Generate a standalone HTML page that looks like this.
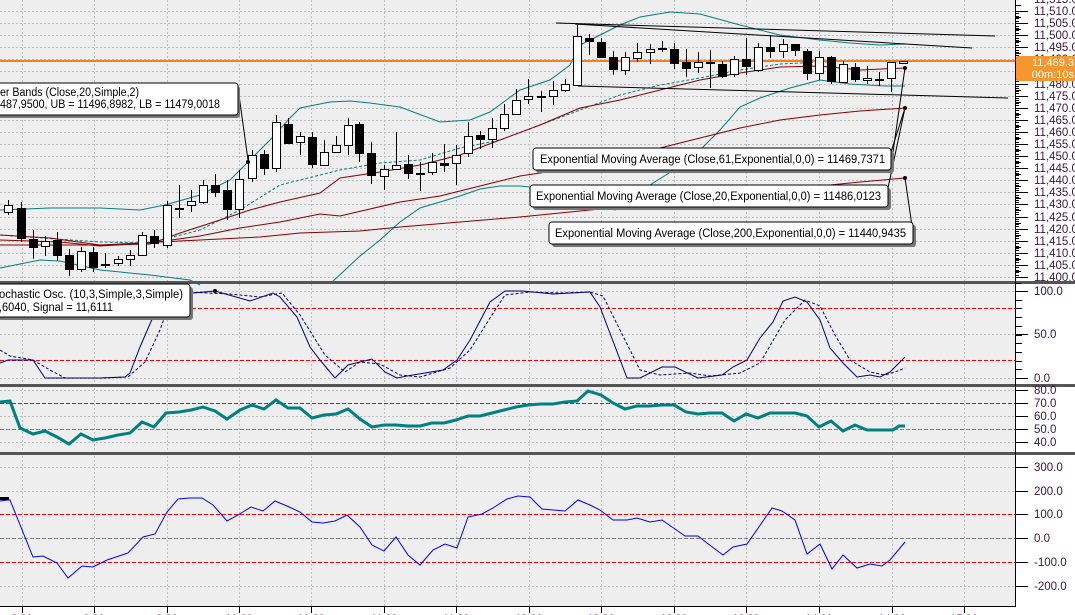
<!DOCTYPE html>
<html><head><meta charset="utf-8"><style>
html,body{margin:0;padding:0;background:#fff;width:1075px;height:615px;overflow:hidden}
svg{display:block}
text{font-family:"Liberation Sans",sans-serif}
</style></head><body>
<svg id="s" width="1075" height="615" xmlns="http://www.w3.org/2000/svg">
<rect x="0" y="0" width="1015" height="606" fill="#eeeeee"/>
<rect x="1015" y="0" width="60" height="615" fill="#fff"/>
<g id="grid"></g>
<g fill="none" stroke-width="1">
<polyline stroke="#008080" points="0,210 50,208 100,208 140,210 165,205 200,195 230,180 250,160 270,140 290,118 300,108 330,102 350,101 370,103 400,107 440,122 470,120 490,112 520,90 550,80 570,65 580,45 600,35 620,25 640,17 670,12 700,14 740,25 780,35 820,40 850,43 880,45 905,44"/>
<polyline stroke="#008080" points="0,268 40,260 60,261 100,270 150,275 190,280 200,285"/>
<polyline stroke="#008080" points="330,284 345,270 360,256 380,240 400,222 420,208 440,202 460,196 480,189 500,186 520,186 540,188 560,192 580,200 600,206 615,210 630,200 653,183 690,160 720,130 740,107 760,98 790,88 820,80 850,84 885,86 905,86"/>
<polyline stroke="#008080" stroke-dasharray="3,2" points="0,235 100,242 150,243 200,230 240,210 280,185 300,180 340,170 380,163 420,160 460,148 500,140 540,125 580,110 620,95 660,85 700,78 740,70 780,64 820,62 860,61 905,62"/>
<polyline stroke="#8b0000" points="0,235 50,238 100,245 150,244 180,233 220,220 250,210 280,202 320,193 340,178 380,172 420,165 460,155 500,140 540,125 580,108 620,100 660,90 700,80 740,73 780,67 820,66 860,70 905,68"/>
<polyline stroke="#8b0000" points="0,240 60,242 100,246 150,243 200,236 240,228 280,222 320,214 340,216 400,202 440,196 480,186 520,176 560,170 600,162 620,160 660,148 700,138 740,128 780,120 820,115 860,111 905,108"/>
<polyline stroke="#8b0000" points="0,245 100,245 200,240 260,237 300,233 360,231 400,227 460,222 520,217 580,211 620,207 700,198 780,190 860,182 905,178"/>
<line x1="556" y1="23" x2="995" y2="36" stroke="#000"/>
<line x1="575" y1="24" x2="972" y2="48" stroke="#000"/>
<line x1="578" y1="86" x2="1008" y2="98" stroke="#000"/>
</g>
<line x1="0" y1="61" x2="1015" y2="61" stroke="#f08020" stroke-width="2"/>
<g id="candles"></g>
<g fill="none" stroke="#000080" stroke-width="1">
<polyline points="0,363 8,360 33,360 45,378 100,378 125,377 130,373 140,347 153,317 163,295 193,293 215,291 250,301 273,293 280,297 297,317 310,347 320,360 335,378 348,365 360,362 372,359 385,372 397,378 407,376 443,370 457,360 470,340 490,302 505,291 523,291 553,294 590,292 600,307 627,378 640,378 662,367 675,367 698,378 722,375 733,367 747,360 760,338 773,322 783,301 795,297 807,302 820,320 830,348 843,363 857,377 870,375 880,377 890,372 905,357"/>
<polyline stroke-dasharray="3,2" points="0,350 10,356 33,360 50,370 65,378 100,378 128,377 145,362 160,330 170,302 185,292 230,294 260,297 282,293 300,315 325,355 345,372 360,362 380,364 400,375 420,377 450,368 470,350 490,318 505,295 530,292 560,293 590,292 603,296 625,340 640,370 660,375 690,373 710,376 740,373 760,363 785,320 805,300 820,306 835,335 850,360 870,372 885,375 895,372 905,368"/>
</g>
<polyline fill="none" stroke="#008080" stroke-width="3" points="0,402 10,401 20,428 33,434 45,431 57,437 69,444 81,434 93,440 105,438 118,435 130,433 142,422 154,427 166,413 179,412 191,410 203,407 215,411 227,419 240,410 252,405 264,409 276,400 288,408 300,408 312,418 324,415 336,414 348,409 360,419 372,427 384,425 396,425 408,426 420,426 432,423 444,423 456,420 468,416 480,416 492,413 504,410 516,407 528,405 541,404 553,404 565,402 577,401 588,391 601,395 613,403 625,409 637,406 650,406 662,405 674,405 686,412 698,414 710,413 722,413 734,421 746,414 758,418 770,413 783,413 795,413 807,416 819,427 831,421 843,431 855,425 867,430 879,430 893,430 899,426 905,426"/>
<polyline fill="none" stroke="#0000ff" stroke-width="1" points="0,501 8,500 10,500 33,557 43,556 57,563 68,578 82,566 93,567 107,560 128,553 143,537 155,534 167,512 178,499 190,498 202,498 213,505 227,521 238,515 251,507 263,511 275,501 287,506 300,512 312,522 323,523 335,521 347,515 360,527 372,545 384,551 396,537 408,555 420,565 433,550 445,544 457,548 468,517 482,514 493,508 507,499 518,496 530,497 542,509 565,511 578,500 590,505 600,510 613,520 627,520 637,518 650,522 662,520 675,529 685,536 698,536 707,543 723,555 733,547 747,544 772,508 782,511 795,520 807,554 820,544 832,569 843,555 857,568 870,564 882,566 890,560 905,542"/>
<rect x="0" y="497" width="9" height="3" fill="#000"/>
<g stroke="#000" stroke-width="1" fill="none">
<polyline points="238,88 248,160"/>
<polyline points="893,152 905,68"/>
<polyline points="891,152 905,108"/>
<polyline points="888,188 905,108"/>
<polyline points="912,226 905,178"/>
</g>
<g fill="#000">
<circle cx="248" cy="162" r="2"/><circle cx="905" cy="68" r="2"/><circle cx="905" cy="108" r="2"/><circle cx="905" cy="178" r="2"/><circle cx="215" cy="291" r="2"/>
</g>
<rect x="0" y="281" width="1075" height="3" fill="#555"/>
<rect x="0" y="384" width="1075" height="3" fill="#555"/>
<rect x="0" y="452" width="1075" height="3" fill="#555"/>
<line x1="1015.5" y1="0" x2="1015.5" y2="606" stroke="#000"/>
<line x1="0" y1="606.5" x2="1016" y2="606.5" stroke="#000"/>
<g id="axis"></g>
<rect x="1016" y="56" width="59" height="25" rx="2" fill="#f7962e"/>
<text x="1074" y="66" font-size="11" fill="#fff" text-anchor="end">11,489.3</text>
<text x="1074" y="78" font-size="11" fill="#fff" text-anchor="end">00m:10s</text>
<g font-size="11.5" fill="#000" lengthAdjust="spacingAndGlyphs">
<rect x="-6" y="86" width="246" height="32" rx="3" fill="#777"/>
<rect x="-8" y="83" width="246" height="32" rx="3" fill="#fff" stroke="#000"/>
<text x="0" y="96" textLength="139" lengthAdjust="spacingAndGlyphs">er Bands (Close,20,Simple,2)</text>
<text x="0" y="108" textLength="220" lengthAdjust="spacingAndGlyphs">487,9500, UB = 11496,8982, LB = 11479,0018</text>
<rect x="536" y="151" width="358" height="22" rx="3" fill="#777"/>
<rect x="533" y="148" width="358" height="22" rx="3" fill="#fff" stroke="#000"/>
<text x="540" y="163" textLength="345" lengthAdjust="spacingAndGlyphs">Exponential Moving Average (Close,61,Exponential,0,0) = 11469,7371</text>
<rect x="533" y="188" width="358" height="22" rx="3" fill="#777"/>
<rect x="530" y="185" width="358" height="22" rx="3" fill="#fff" stroke="#000"/>
<text x="536" y="200" textLength="345" lengthAdjust="spacingAndGlyphs">Exponential Moving Average (Close,20,Exponential,0,0) = 11486,0123</text>
<rect x="552" y="225" width="364" height="22" rx="3" fill="#777"/>
<rect x="549" y="222" width="364" height="22" rx="3" fill="#fff" stroke="#000"/>
<text x="555" y="237" textLength="351" lengthAdjust="spacingAndGlyphs">Exponential Moving Average (Close,200,Exponential,0,0) = 11440,9435</text>
<rect x="-6" y="287" width="199" height="33" rx="3" fill="#777"/>
<rect x="-8" y="284" width="198" height="33" rx="3" fill="#fff" stroke="#000"/>
<text x="-1" y="298" textLength="184" lengthAdjust="spacingAndGlyphs">ochastic Osc. (10,3,Simple,3,Simple)</text>
<text x="-1" y="311" textLength="114" lengthAdjust="spacingAndGlyphs">,6040, Signal = 11,6111</text>
</g>
</svg>
<script>
var NS="http://www.w3.org/2000/svg";
function el(p,t,a,txt){var e=document.createElementNS(NS,t);for(var k in a)e.setAttribute(k,a[k]);if(txt!=null)e.textContent=txt;p.appendChild(e);return e;}
var grid=document.getElementById('grid');
var vx=[22,94,167,239,311,384,456,529,601,674,746,819,892,964];
vx.forEach(function(x){el(grid,'line',{x1:x+.5,y1:0,x2:x+.5,y2:606,stroke:'#bdbdbd','stroke-dasharray':'2,2'});});
for(var k=0;k<=22;k++){var y=Math.round(11+k*12.09)+.5;el(grid,'line',{x1:0,y1:y,x2:1015,y2:y,stroke:'#bdbdbd','stroke-dasharray':'2,2'});}
[[291,'#bdbdbd',0],[334,'#bdbdbd',0],[378,'#bdbdbd',0],[308,'#ff0000',1],[360,'#ff0000',1],
 [390,'#bdbdbd',0],[416,'#bdbdbd',0],[442,'#bdbdbd',0],[403,'#ff0000',1],[429,'#808080',1],
 [467,'#bdbdbd',0],[491,'#bdbdbd',0],[586,'#bdbdbd',0],[514,'#ff0000',1],[562,'#ff0000',1],[538,'#808080',1]
].forEach(function(g){el(grid,'line',{x1:0,y1:g[0]+.5,x2:1015,y2:g[0]+.5,stroke:g[1],'stroke-dasharray':g[2]?'4,2':'2,2'});});
var C=[[8,212,205,200,215],[21,208,238,202,242],[33,239,247,230,259],[45,246,241,236,256],[57,240,255,232,261],[69,255,269,249,276],[81,269,251,247,272],[93,252,267,247,272],[105,264,264,253,268],[118,263,259,256,266],[130,259,255,250,266],[142,255,235,232,256],[154,236,243,230,248],[167,245,205,201,248],[179,208,208,185,218],[191,205,201,190,212],[203,202,185,180,204],[215,185,192,174,197],[227,190,209,180,220],[239,209,179,170,218],[252,178,155,150,182],[264,154,168,150,175],[276,168,122,115,172],[288,124,143,118,143],[300,142,136,132,155],[312,137,164,132,168],[324,165,152,140,165],[336,152,145,136,152],[348,145,125,118,155],[359,124,153,122,162],[371,153,175,142,184],[384,176,169,165,190],[396,169,165,132,170],[408,164,173,155,179],[420,173,174,162,191],[432,172,162,153,175],[444,163,165,144,172],[456,163,155,145,185],[468,153,136,122,157],[480,135,139,131,149],[492,139,128,118,148],[504,128,114,104,131],[516,114,100,89,115],[528,99,96,79,104],[541,96,97,91,112],[553,96,90,81,105],[565,90,84,79,92],[577,85,36,24,86],[589,38,41,34,55],[601,42,57,38,58],[613,57,69,51,75],[625,70,57,52,75],[637,58,52,43,62],[650,52,49,44,64],[662,48,49,41,52],[674,49,63,43,69],[686,62,68,49,77],[698,67,62,52,73],[710,62,63,50,88],[722,64,76,61,78],[734,74,59,56,77],[746,59,66,38,75],[758,70,47,43,72],[770,47,51,35,58],[783,51,44,39,58],[795,44,50,44,56],[807,51,73,49,80],[819,73,57,51,80],[831,57,81,56,84],[843,82,64,61,83],[855,67,79,63,82],[867,80,78,66,84],[879,79,79,72,86],[891,78,62,62,92],[903,63,61,61,63]];
var cg=document.getElementById('candles');
C.forEach(function(c){var x=c[0],o=c[1],cl=c[2],top=Math.min(o,cl),bot=Math.max(o,cl),up=cl<o;
el(cg,'line',{x1:x+.5,y1:c[3],x2:x+.5,y2:c[4],stroke:'#000'});
if(bot-top<1.5){el(cg,'rect',{x:x-4,y:top,width:9,height:2,fill:'#000'});}
else el(cg,'rect',{x:x-3.5,y:top+.5,width:8,height:bot-top,fill:up?'#fff':'#000',stroke:'#000'});
});
var ax=document.getElementById('axis');
function lab(y,t){el(ax,'text',{x:1034,y:y+4,'font-size':'11.5',fill:'#3c1838'},t);el(ax,'line',{x1:1015,y1:y+.5,x2:1028,y2:y+.5,stroke:'#000'});}
for(var p=11515;p>=11400;p-=5){var y=Math.round(11+(11510-p)*2.418);lab(y,(p/1000|0)+','+String(p%1000).padStart(3,'0')+'.0');
 el(ax,'line',{x1:1015,y1:y+6.5,x2:1021,y2:y+6.5,stroke:'#000'});}
for(var y2=11;y2<278;y2+=2.418){el(ax,'line',{x1:1015,y1:Math.round(y2)+.5,x2:1019,y2:Math.round(y2)+.5,stroke:'#000'});}
[[291,'100.0'],[334,'50.0'],[378,'0.0'],[390,'80.0'],[403,'70.0'],[416,'60.0'],[429,'50.0'],[442,'40.0'],[467,'300.0'],[491,'200.0'],[514,'100.0'],[538,'0.0'],[562,'-100.0'],[586,'-200.0']].forEach(function(a){lab(a[0],a[1]);});
for(var i=0;i<11;i++){var yy=Math.round(291+i*8.7);el(ax,'line',{x1:1015,y1:yy+.5,x2:1022,y2:yy+.5,stroke:'#000'});}
var tl=['8:00','9:00','9:30','10:00','10:30','11:00','11:30','12:00','12:30','13:00','13:30','14:00','14:30','15:00'];
vx.forEach(function(x,i){el(ax,'line',{x1:x+.5,y1:606,x2:x+.5,y2:613,stroke:'#000'});el(ax,'text',{x:x,y:622,'font-size':'11',fill:'#3c1838','text-anchor':'middle'},tl[i]);});
</script>
</body></html>
